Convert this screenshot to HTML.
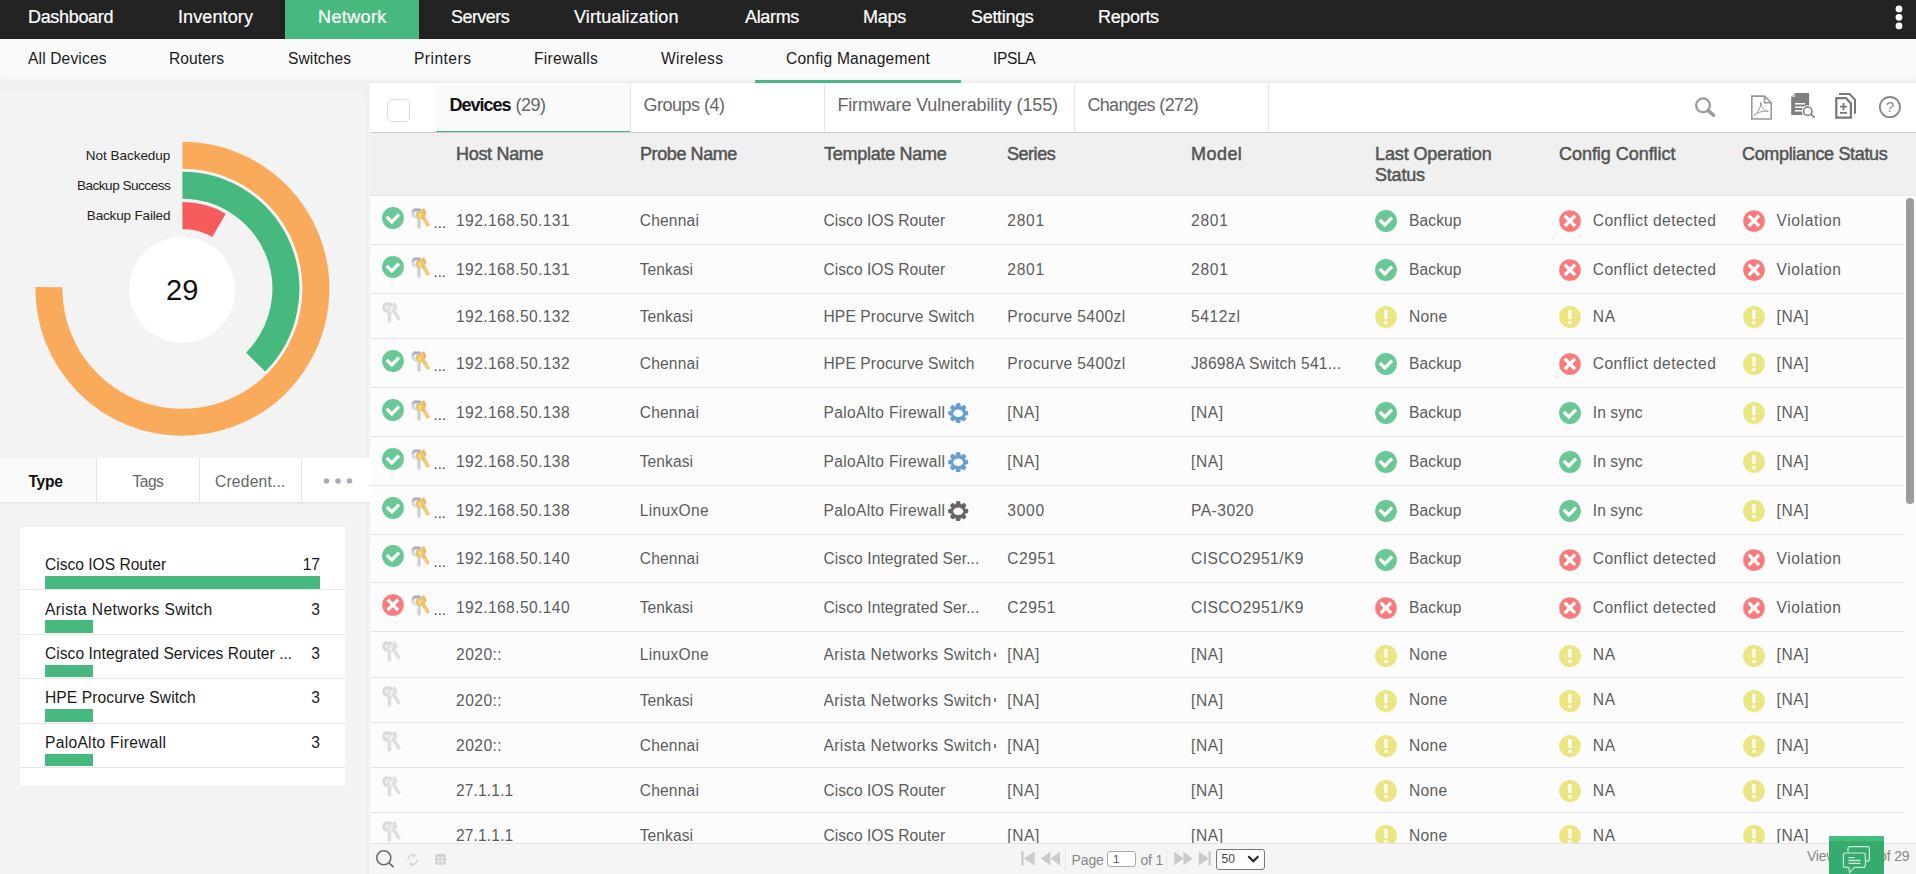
<!DOCTYPE html><html lang="en"><head><meta charset="utf-8"><title>Config Management</title>
<style>
*{box-sizing:border-box}
html,body{margin:0;padding:0}
body{width:1916px;height:874px;overflow:hidden;position:relative;background:#f3f3f3;font-family:"Liberation Sans",sans-serif;color:#5c5c5c;font-size:15.6px}
.f{white-space:nowrap}
.topnav{position:absolute;left:0;top:0;width:1916px;height:38.6px;background:#232323;color:#fff;font-size:18px;white-space:nowrap}
.topnav span.i{position:absolute;top:0;height:39px;line-height:34px;-webkit-text-stroke:.2px #fff}
.topnav .act{position:absolute;top:0;height:38.6px;background:#47b97f;left:285px;width:134px}
.kebab{position:absolute;left:1895px;top:5px;width:8px;height:26px}
.subnav{position:absolute;left:0;top:39px;width:1916px;height:44px;background:#fafafa;color:#1b1b1b;font-size:15.6px;box-shadow:inset 0 -7px 6px -5px rgba(0,0,0,.075)}
.subnav span.i{position:absolute;top:0;line-height:40px;white-space:nowrap}
.subnav .ul{position:absolute;left:755px;width:206px;top:41px;height:3px;background:#47b97f}
.left{position:absolute;left:0;top:83px;width:370px;height:791px;background:#f1f1f1}
.left .in{position:absolute;left:0;top:10px;width:365px;height:781px;background:#f3f3f3;border-top-right-radius:5px}
.donut{position:absolute;left:0;top:0;font-family:"Liberation Sans",sans-serif}
.ltabs{position:absolute;left:0;top:375px;width:370px;height:44px;background:#fff;box-shadow:0 1px 2px rgba(0,0,0,.08);font-size:15.6px;color:#666}
.ltabs div{position:absolute;top:0;height:44px;line-height:47px;border-right:1px solid #e4e4e4;white-space:nowrap}
.tcard{position:absolute;left:20px;top:444px;width:325px;height:259px;background:#fff;padding-top:19px}
.ti{position:relative;height:44.4px;border-bottom:1px solid #e6e6e6;color:#1a1a1a;font-size:15.6px}
.ti .tl{position:absolute;left:25px;top:9.3px;line-height:20px;white-space:nowrap}
.ti .tc{position:absolute;right:25px;top:9.3px;line-height:20px}
.ti i{position:absolute;left:25px;top:30px;height:12.6px;background:#47b97f}
.main{position:absolute;left:370px;top:83px;width:1546px;height:791px;background:#fcfcfc}
.tabs{position:absolute;left:0;top:0;width:1546px;height:50px;background:#fff;border-bottom:1px solid #ccc;font-size:18px;color:#666}
.tabs .tab{position:absolute;top:0;height:49px;border-right:1px solid #e6e6e6;line-height:44px;padding-left:13.6px;white-space:nowrap}
.gl{position:absolute;left:0;right:0;bottom:-.2px;height:1.5px;background:#47b97f}
.cb{position:absolute;left:17px;top:16px;width:23px;height:23px;border:1px solid #dcdcdc;border-radius:5px;background:#fff}
.tool{position:absolute;top:0;left:0}
.thead{position:absolute;left:0;top:50px;width:1546px;height:63px;background:#f0f0f0;border-bottom:1px solid #e6e6e6;font-size:18px;color:#555;-webkit-text-stroke:.5px #555}
.thead div{position:absolute;top:11px;line-height:21px}
.tbody{position:absolute;left:0;top:113px;width:1534px;height:647px;overflow:hidden}
.tr{position:relative;border-bottom:1px solid #e4e4e4;display:flex;align-items:center;width:1534px;background:#fcfcfc}
.c0{width:86px;flex:none;position:relative;align-self:stretch}
.td{width:183.75px;flex:none;white-space:nowrap;overflow:hidden;line-height:22px;position:relative;top:1.1px}
.td.tn{padding-right:12px}
.st0{position:absolute;left:12.1px;top:50%;margin-top:-12.9px;width:22px;height:22px}
.keys{position:absolute;width:20px;height:21px;top:50%}
.k1{left:41px;margin-top:-12.5px}
.k0{left:12px;margin-top:-13.7px}
.dots{position:absolute;left:63.5px;top:50%;margin-top:-6.7px;width:11px;overflow:hidden;color:#444;font-size:15px;line-height:20px;letter-spacing:0;white-space:nowrap}
.td.s{display:flex;align-items:center;overflow:visible;top:0}
.k1{opacity:.88}
.st{width:22px;height:22px;flex:none;margin-left:.4px;position:relative;top:1.4px}
.stt{margin-left:11.9px;position:relative;top:.8px}
.gear{width:20.4px;height:20.4px;vertical-align:-5.2px;margin-left:2.9px}
.clipg{display:inline-block;width:1.5px;height:4px;border-radius:1px 0 0 1px;background:#777;margin-left:2.6px;vertical-align:3.2px}
.foot{position:absolute;left:0;top:760px;width:1546px;height:31px;background:#f5f5f5;border-top:1px solid #e3e3e3;font-size:14px;color:#888}
.foot .t{position:absolute;top:7.5px;line-height:16px}
.foot svg{position:absolute;left:0;top:-1px;z-index:2}
.pin{position:absolute;left:737px;top:7px;width:28.5px;height:15.5px;border:1px solid #aaa;border-radius:3px;background:#fff;font-size:11.5px;line-height:14px;padding-left:5px;color:#555}
.psel{position:absolute;left:845.5px;top:4.5px;width:49px;height:21px;border:1px solid #767676;border-radius:3px;background:#fff;font-size:12px;line-height:19px;padding-left:5px;color:#444}
.sb{position:absolute;left:1536px;top:115px;width:8px;height:306px;border-radius:4px;background:#9c9c9c}
.chat{position:absolute;left:1829px;top:836px;width:55px;height:38px;background:#35ac6e;border-top:5px solid #45bd80}
.chat svg{position:absolute;left:0;top:-5px}
</style></head><body>
<div class="topnav"><i class="act"></i>
<span class="i" style="left:28px"><span class="f" style="letter-spacing: -0.33px;">Dashboard</span></span><span class="i" style="left:178px"><span class="f" style="letter-spacing: 0.11px;">Inventory</span></span><span class="i" style="left:318px"><span class="f" style="letter-spacing: 0.39px;">Network</span></span><span class="i" style="left:451px"><span class="f" style="letter-spacing: -0.55px;">Servers</span></span><span class="i" style="left:574px"><span class="f" style="letter-spacing: 0.13px;">Virtualization</span></span><span class="i" style="left:745px"><span class="f" style="letter-spacing: -0.33px;">Alarms</span></span><span class="i" style="left:863px"><span class="f" style="letter-spacing: -0.27px;">Maps</span></span><span class="i" style="left:971px"><span class="f" style="letter-spacing: -0.31px;">Settings</span></span><span class="i" style="left:1098px"><span class="f" style="letter-spacing: -0.32px;">Reports</span></span>
<svg class="kebab" viewBox="0 0 8 26"><circle cx="4" cy="3.9" r="3.4" fill="#fff"></circle><circle cx="4" cy="12.3" r="3.4" fill="#fff"></circle><circle cx="4" cy="20.9" r="3.4" fill="#fff"></circle></svg>
</div>
<div class="subnav">
<span class="i" style="left:28px"><span class="f" style="letter-spacing: 0.14px;">All Devices</span></span><span class="i" style="left:169px"><span class="f" style="letter-spacing: 0.06px;">Routers</span></span><span class="i" style="left:288px"><span class="f" style="letter-spacing: 0.1px;">Switches</span></span><span class="i" style="left:414px"><span class="f" style="letter-spacing: 0.46px;">Printers</span></span><span class="i" style="left:534px"><span class="f" style="letter-spacing: 0.3px;">Firewalls</span></span><span class="i" style="left:661px"><span class="f" style="letter-spacing: 0.31px;">Wireless</span></span><span class="i" style="left:786px"><span class="f" style="letter-spacing: 0.21px;">Config Management</span></span><span class="i" style="left:993px"><span class="f" style="letter-spacing: -0.38px;">IPSLA</span></span>
<i class="ul"></i>
</div>
<div class="left"><i class="in"></i>
<svg class="donut" width="370" height="375" viewBox="0 83 370 375"><path d="M182.40 155.30 A133.5 133.5 0 1 1 48.91 287.17" fill="none" stroke="#f9ab5b" stroke-width="27"></path><path d="M182.40 185.30 A103.5 103.5 0 0 1 255.59 361.99" fill="none" stroke="#47b97f" stroke-width="27"></path><path d="M182.40 215.50 A73.3 73.3 0 0 1 219.05 225.32" fill="none" stroke="#f75c5c" stroke-width="27"></path><circle cx="182.2" cy="289.7" r="53" fill="#fff"></circle><text x="182.2" y="300" text-anchor="middle" font-size="29" fill="#111" class="n29">29</text><text x="170.3" y="159.8" text-anchor="end" font-size="13.5" fill="#222" class="f" style="letter-spacing: -0.03px;">Not Backedup</text><text x="170.3" y="189.8" text-anchor="end" font-size="13.5" fill="#222" class="f" style="letter-spacing: -0.46px;">Backup Success</text><text x="170.3" y="219.8" text-anchor="end" font-size="13.5" fill="#222" class="f" style="letter-spacing: -0.16px;">Backup Failed</text></svg>
<div class="ltabs">
<div style="left:0;width:97px;background:#fafafa;color:#111;font-weight:bold;padding-left:28.4px"><span class="f" style="letter-spacing: -0.26px;">Type</span></div>
<div style="left:97px;width:103px;padding-left:35.6px"><span class="f" style="letter-spacing: -0.59px;">Tags</span></div>
<div style="left:200px;width:102px;padding-left:15px"><span class="f" style="letter-spacing: 0.21px;">Credent...</span></div>
<div style="left:302px;width:68px;border-right:0;padding-left:20.5px"><svg width="30" height="8" viewBox="0 0 30 8" style="vertical-align:1.6px"><circle cx="3.5" cy="4" r="2.8" fill="#a9adb8"></circle><circle cx="15" cy="4" r="2.8" fill="#a9adb8"></circle><circle cx="26.5" cy="4" r="2.8" fill="#a9adb8"></circle></svg></div>
</div>
<div class="tcard">
<div class="ti"><span class="tl f" style="letter-spacing: -0.01px;">Cisco IOS Router</span><span class="tc">17</span><i style="width:274.5px"></i></div>
<div class="ti"><span class="tl f" style="letter-spacing: 0.37px;">Arista Networks Switch</span><span class="tc">3</span><i style="width:48.0px"></i></div>
<div class="ti"><span class="tl f" style="letter-spacing: 0.03px;">Cisco Integrated Services Router ...</span><span class="tc">3</span><i style="width:48.0px"></i></div>
<div class="ti"><span class="tl f" style="letter-spacing: 0.09px;">HPE Procurve Switch</span><span class="tc">3</span><i style="width:48.0px"></i></div>
<div class="ti"><span class="tl f" style="letter-spacing: 0.3px;">PaloAlto Firewall</span><span class="tc">3</span><i style="width:48.0px"></i></div>
</div>
</div>
<div class="main">
<div class="tabs">
<i class="cb"></i>
<div class="tab" style="left:66px;width:195px;background:#fafafa;color:#666"><b style="color:#111"><span class="f" style="letter-spacing: -1.01px;">Devices</span></b> <span class="f" style="letter-spacing: -0.5px;">(29)</span><i class="gl"></i></div>
<div class="tab" style="left:261px;width:194px;padding-left:12.4px"><span class="f" style="letter-spacing: -0.5px;">Groups (4)</span></div>
<div class="tab" style="left:455px;width:250px;padding-left:12.4px"><span class="f" style="letter-spacing: -0.14px;">Firmware Vulnerability (155)</span></div>
<div class="tab" style="left:705px;width:194px;padding-left:12.4px"><span class="f" style="letter-spacing: -0.64px;">Changes (272)</span></div>
<svg class="tool" width="1546" height="50" viewBox="0 0 1546 50" fill="none">
<circle cx="1333" cy="22.3" r="6.9" stroke="#999" stroke-width="2.2"></circle><path d="M1338.2 27.6 L1343.6 32.2" stroke="#999" stroke-width="3.4" stroke-linecap="round"></path>
<path d="M1381.8 13.1 H1394.5 L1401.2 19.8 V36 H1381.8 Z M1394.5 13.1 V19.8 H1401.2" stroke="#999" stroke-width="1.6" fill="#fff"></path>
<path d="M1384.2 32.4 C1388 30 1391 24 1390.8 19.3 C1391 24 1394 28 1398.3 28.4 C1394 27.5 1388 29 1384.2 32.4" stroke="#999" stroke-width="1"></path>
<path d="M1425.2 10.1 H1439.1 V32.1 H1421.2 V14.1 Z" fill="#808080"></path><path d="M1421.2 14.1 H1425.2 V10.1" fill="#c4c4c4"></path>
<path d="M1425 20.7 H1435 M1425 24.2 H1435 M1425 27.7 H1435" stroke="#fff" stroke-width="1.4"></path>
<circle cx="1437.7" cy="28.2" r="5.9" fill="#fff"></circle><path d="M1441 31.4 L1444.8 34.8" stroke="#fff" stroke-width="3.4"></path>
<circle cx="1437.7" cy="28.2" r="4.2" fill="#fff" stroke="#808080" stroke-width="1.6"></circle><path d="M1440.8 31.2 L1444.6 34.6" stroke="#808080" stroke-width="1.6"></path>
<path d="M1469 11 H1479.6 L1485 16.8 V30.7" stroke="#777" stroke-width="2"></path>
<path d="M1466.3 15.1 H1476 L1480.9 20.5 V34.7 H1466.3 Z" stroke="#777" stroke-width="2.2" fill="#fff"></path>
<path d="M1473.5 20.1 V27.1 M1470 23.6 H1477 M1470 29.9 H1477" stroke="#777" stroke-width="1.9"></path>
<circle cx="1519.9" cy="24.1" r="10.1" stroke="#888" stroke-width="1.8"></circle>
<text x="1519.9" y="29.2" text-anchor="middle" font-size="15" fill="#888" font-family="Liberation Sans, sans-serif">?</text>
</svg>
</div>
<div class="thead">
<div style="left:86px"><span class="f" style="letter-spacing: -0.31px;">Host Name</span></div><div style="left:270px"><span class="f" style="letter-spacing: -0.41px;">Probe Name</span></div><div style="left:454px"><span class="f" style="letter-spacing: -0.27px;">Template Name</span></div><div style="left:637px"><span class="f" style="letter-spacing: -0.47px;">Series</span></div><div style="left:821px"><span class="f" style="letter-spacing: 0.46px;">Model</span></div><div style="left:1005px"><span class="f" style="letter-spacing: -0.11px;">Last Operation</span><br><span class="f" style="letter-spacing: -0.21px;">Status</span></div><div style="left:1189px"><span class="f" style="letter-spacing: -0.04px;">Config Conflict</span></div><div style="left:1372px"><span class="f" style="letter-spacing: -0.33px;">Compliance Status</span></div>
</div>
<div class="tbody">
<div class="tr" style="height:49px"><div class="c0"><svg class="st0" viewBox="0 0 22 22"><circle cx="11" cy="11" r="10.9" fill="#69c896"></circle><path d="M4.7 9.8 L9.8 14.9 L17 7.65" fill="none" stroke="#fff" stroke-width="3.3"></path></svg><svg class="keys k1" viewBox="0 0 20 21"><defs><linearGradient id="sg" x1="0" y1="0" x2="0" y2="1"><stop offset="0" stop-color="#8d99ad"></stop><stop offset=".5" stop-color="#c9ccd2"></stop><stop offset="1" stop-color="#e0e0e0"></stop></linearGradient><linearGradient id="sh" x1="0" y1="0" x2="1" y2="0"><stop offset="0" stop-color="#e9e9e9"></stop><stop offset=".7" stop-color="#cfcfcf"></stop><stop offset="1" stop-color="#8f8f8f"></stop></linearGradient></defs><path d="M3 .6 H8.8 L11 3 V8 L8.8 10.6 H3 L.6 8 V3 Z" fill="url(#sg)"></path><rect x="3.2" y="3.6" width="3.6" height="4" rx="1" fill="#eef0f4"></rect><rect x="5.6" y="9.6" width="3.6" height="10.8" rx=".8" fill="url(#sh)"></rect><path d="M10.6 1.2 L13.2 .2 L15.6 5.6 L13.4 8.4 Z" fill="#eeb04c"></path><ellipse cx="8.8" cy="7" rx="3.9" ry="4.2" fill="#efbb58"></ellipse><ellipse cx="9.6" cy="7.6" rx="1.8" ry="2.4" fill="#f8e37c"></ellipse><path d="M11.4 8 L16.6 16.6" stroke="#efba56" stroke-width="3.6" stroke-linecap="round" fill="none"></path><path d="M13.6 12.4 L16.2 16.4" stroke="#f7d477" stroke-width="1.4" fill="none"></path></svg><span class="dots">...</span></div><div class="td"><span class="f" style="letter-spacing: 0.4px;">192.168.50.131</span></div><div class="td"><span class="f" style="letter-spacing: 0.17px;">Chennai</span></div><div class="td tn"><span class="f" style="letter-spacing: 0.02px;">Cisco IOS Router</span></div><div class="td"><span class="f" style="letter-spacing: 0.72px;">2801</span></div><div class="td"><span class="f" style="letter-spacing: 0.72px;">2801</span></div><div class="td s"><svg class="st" viewBox="0 0 22 22"><circle cx="11" cy="11" r="10.9" fill="#69c896"></circle><path d="M4.7 9.8 L9.8 14.9 L17 7.65" fill="none" stroke="#fff" stroke-width="3.3"></path></svg><span class="f stt" style="letter-spacing: 0.1px;">Backup</span></div><div class="td s"><svg class="st" viewBox="0 0 22 22"><circle cx="11" cy="11" r="10.8" fill="#f97b7b"></circle><path d="M5.7 5.7 L16.1 16.1 M16.1 5.7 L5.7 16.1" fill="none" stroke="#fff" stroke-width="3.3"></path></svg><span class="f stt" style="letter-spacing: 0.43px;">Conflict detected</span></div><div class="td s"><svg class="st" viewBox="0 0 22 22"><circle cx="11" cy="11" r="10.8" fill="#f97b7b"></circle><path d="M5.7 5.7 L16.1 16.1 M16.1 5.7 L5.7 16.1" fill="none" stroke="#fff" stroke-width="3.3"></path></svg><span class="f stt" style="letter-spacing: 0.61px;">Violation</span></div></div>
<div class="tr" style="height:49px"><div class="c0"><svg class="st0" viewBox="0 0 22 22"><circle cx="11" cy="11" r="10.9" fill="#69c896"></circle><path d="M4.7 9.8 L9.8 14.9 L17 7.65" fill="none" stroke="#fff" stroke-width="3.3"></path></svg><svg class="keys k1" viewBox="0 0 20 21"><defs><linearGradient id="sg" x1="0" y1="0" x2="0" y2="1"><stop offset="0" stop-color="#8d99ad"></stop><stop offset=".5" stop-color="#c9ccd2"></stop><stop offset="1" stop-color="#e0e0e0"></stop></linearGradient><linearGradient id="sh" x1="0" y1="0" x2="1" y2="0"><stop offset="0" stop-color="#e9e9e9"></stop><stop offset=".7" stop-color="#cfcfcf"></stop><stop offset="1" stop-color="#8f8f8f"></stop></linearGradient></defs><path d="M3 .6 H8.8 L11 3 V8 L8.8 10.6 H3 L.6 8 V3 Z" fill="url(#sg)"></path><rect x="3.2" y="3.6" width="3.6" height="4" rx="1" fill="#eef0f4"></rect><rect x="5.6" y="9.6" width="3.6" height="10.8" rx=".8" fill="url(#sh)"></rect><path d="M10.6 1.2 L13.2 .2 L15.6 5.6 L13.4 8.4 Z" fill="#eeb04c"></path><ellipse cx="8.8" cy="7" rx="3.9" ry="4.2" fill="#efbb58"></ellipse><ellipse cx="9.6" cy="7.6" rx="1.8" ry="2.4" fill="#f8e37c"></ellipse><path d="M11.4 8 L16.6 16.6" stroke="#efba56" stroke-width="3.6" stroke-linecap="round" fill="none"></path><path d="M13.6 12.4 L16.2 16.4" stroke="#f7d477" stroke-width="1.4" fill="none"></path></svg><span class="dots">...</span></div><div class="td"><span class="f" style="letter-spacing: 0.4px;">192.168.50.131</span></div><div class="td"><span class="f" style="letter-spacing: 0.07px;">Tenkasi</span></div><div class="td tn"><span class="f" style="letter-spacing: 0.02px;">Cisco IOS Router</span></div><div class="td"><span class="f" style="letter-spacing: 0.72px;">2801</span></div><div class="td"><span class="f" style="letter-spacing: 0.72px;">2801</span></div><div class="td s"><svg class="st" viewBox="0 0 22 22"><circle cx="11" cy="11" r="10.9" fill="#69c896"></circle><path d="M4.7 9.8 L9.8 14.9 L17 7.65" fill="none" stroke="#fff" stroke-width="3.3"></path></svg><span class="f stt" style="letter-spacing: 0.1px;">Backup</span></div><div class="td s"><svg class="st" viewBox="0 0 22 22"><circle cx="11" cy="11" r="10.8" fill="#f97b7b"></circle><path d="M5.7 5.7 L16.1 16.1 M16.1 5.7 L5.7 16.1" fill="none" stroke="#fff" stroke-width="3.3"></path></svg><span class="f stt" style="letter-spacing: 0.43px;">Conflict detected</span></div><div class="td s"><svg class="st" viewBox="0 0 22 22"><circle cx="11" cy="11" r="10.8" fill="#f97b7b"></circle><path d="M5.7 5.7 L16.1 16.1 M16.1 5.7 L5.7 16.1" fill="none" stroke="#fff" stroke-width="3.3"></path></svg><span class="f stt" style="letter-spacing: 0.61px;">Violation</span></div></div>
<div class="tr" style="height:45px"><div class="c0"><svg class="keys k0" viewBox="0 0 20 21" opacity=".55"><path d="M3 .6 H8.8 L11 3 V8 L8.8 10.6 H3 L.6 8 V3 Z" fill="#b9bcc2"></path><rect x="3.2" y="3.6" width="3.6" height="4" rx="1" fill="#f1f1f1"></rect><rect x="5.6" y="9.6" width="3.6" height="10.8" rx=".8" fill="#c6c6c6"></rect><path d="M10.6 1.2 L13.2 .2 L15.6 5.6 L13.4 8.4 Z" fill="#c2c2c2"></path><ellipse cx="8.8" cy="7" rx="3.9" ry="4.2" fill="#cfcfcf"></ellipse><ellipse cx="9.6" cy="7.6" rx="1.8" ry="2.4" fill="#ececec"></ellipse><path d="M11.4 8 L16.6 16.6" stroke="#c9c9c9" stroke-width="3.6" stroke-linecap="round" fill="none"></path></svg></div><div class="td"><span class="f" style="letter-spacing: 0.4px;">192.168.50.132</span></div><div class="td"><span class="f" style="letter-spacing: 0.07px;">Tenkasi</span></div><div class="td tn"><span class="f" style="letter-spacing: 0.11px;">HPE Procurve Switch</span></div><div class="td"><span class="f" style="letter-spacing: 0.37px;">Procurve 5400zl</span></div><div class="td"><span class="f" style="letter-spacing: 0.59px;">5412zl</span></div><div class="td s"><svg class="st" viewBox="0 0 22 22"><circle cx="11" cy="11" r="10.9" fill="#ebe582"></circle><path d="M10.9 4 V13 M10.9 14.9 V18" fill="none" stroke="#fff" stroke-width="3.3"></path></svg><span class="f stt" style="letter-spacing: 0.28px;">None</span></div><div class="td s"><svg class="st" viewBox="0 0 22 22"><circle cx="11" cy="11" r="10.9" fill="#ebe582"></circle><path d="M10.9 4 V13 M10.9 14.9 V18" fill="none" stroke="#fff" stroke-width="3.3"></path></svg><span class="f stt" style="letter-spacing: 0.66px;">NA</span></div><div class="td s"><svg class="st" viewBox="0 0 22 22"><circle cx="11" cy="11" r="10.9" fill="#ebe582"></circle><path d="M10.9 4 V13 M10.9 14.9 V18" fill="none" stroke="#fff" stroke-width="3.3"></path></svg><span class="f stt" style="letter-spacing: 0.57px;">[NA]</span></div></div>
<div class="tr" style="height:49px"><div class="c0"><svg class="st0" viewBox="0 0 22 22"><circle cx="11" cy="11" r="10.9" fill="#69c896"></circle><path d="M4.7 9.8 L9.8 14.9 L17 7.65" fill="none" stroke="#fff" stroke-width="3.3"></path></svg><svg class="keys k1" viewBox="0 0 20 21"><defs><linearGradient id="sg" x1="0" y1="0" x2="0" y2="1"><stop offset="0" stop-color="#8d99ad"></stop><stop offset=".5" stop-color="#c9ccd2"></stop><stop offset="1" stop-color="#e0e0e0"></stop></linearGradient><linearGradient id="sh" x1="0" y1="0" x2="1" y2="0"><stop offset="0" stop-color="#e9e9e9"></stop><stop offset=".7" stop-color="#cfcfcf"></stop><stop offset="1" stop-color="#8f8f8f"></stop></linearGradient></defs><path d="M3 .6 H8.8 L11 3 V8 L8.8 10.6 H3 L.6 8 V3 Z" fill="url(#sg)"></path><rect x="3.2" y="3.6" width="3.6" height="4" rx="1" fill="#eef0f4"></rect><rect x="5.6" y="9.6" width="3.6" height="10.8" rx=".8" fill="url(#sh)"></rect><path d="M10.6 1.2 L13.2 .2 L15.6 5.6 L13.4 8.4 Z" fill="#eeb04c"></path><ellipse cx="8.8" cy="7" rx="3.9" ry="4.2" fill="#efbb58"></ellipse><ellipse cx="9.6" cy="7.6" rx="1.8" ry="2.4" fill="#f8e37c"></ellipse><path d="M11.4 8 L16.6 16.6" stroke="#efba56" stroke-width="3.6" stroke-linecap="round" fill="none"></path><path d="M13.6 12.4 L16.2 16.4" stroke="#f7d477" stroke-width="1.4" fill="none"></path></svg><span class="dots">...</span></div><div class="td"><span class="f" style="letter-spacing: 0.4px;">192.168.50.132</span></div><div class="td"><span class="f" style="letter-spacing: 0.17px;">Chennai</span></div><div class="td tn"><span class="f" style="letter-spacing: 0.11px;">HPE Procurve Switch</span></div><div class="td"><span class="f" style="letter-spacing: 0.37px;">Procurve 5400zl</span></div><div class="td"><span class="f" style="letter-spacing: 0.24px;">J8698A Switch 541...</span></div><div class="td s"><svg class="st" viewBox="0 0 22 22"><circle cx="11" cy="11" r="10.9" fill="#69c896"></circle><path d="M4.7 9.8 L9.8 14.9 L17 7.65" fill="none" stroke="#fff" stroke-width="3.3"></path></svg><span class="f stt" style="letter-spacing: 0.1px;">Backup</span></div><div class="td s"><svg class="st" viewBox="0 0 22 22"><circle cx="11" cy="11" r="10.8" fill="#f97b7b"></circle><path d="M5.7 5.7 L16.1 16.1 M16.1 5.7 L5.7 16.1" fill="none" stroke="#fff" stroke-width="3.3"></path></svg><span class="f stt" style="letter-spacing: 0.43px;">Conflict detected</span></div><div class="td s"><svg class="st" viewBox="0 0 22 22"><circle cx="11" cy="11" r="10.9" fill="#ebe582"></circle><path d="M10.9 4 V13 M10.9 14.9 V18" fill="none" stroke="#fff" stroke-width="3.3"></path></svg><span class="f stt" style="letter-spacing: 0.57px;">[NA]</span></div></div>
<div class="tr" style="height:49px"><div class="c0"><svg class="st0" viewBox="0 0 22 22"><circle cx="11" cy="11" r="10.9" fill="#69c896"></circle><path d="M4.7 9.8 L9.8 14.9 L17 7.65" fill="none" stroke="#fff" stroke-width="3.3"></path></svg><svg class="keys k1" viewBox="0 0 20 21"><defs><linearGradient id="sg" x1="0" y1="0" x2="0" y2="1"><stop offset="0" stop-color="#8d99ad"></stop><stop offset=".5" stop-color="#c9ccd2"></stop><stop offset="1" stop-color="#e0e0e0"></stop></linearGradient><linearGradient id="sh" x1="0" y1="0" x2="1" y2="0"><stop offset="0" stop-color="#e9e9e9"></stop><stop offset=".7" stop-color="#cfcfcf"></stop><stop offset="1" stop-color="#8f8f8f"></stop></linearGradient></defs><path d="M3 .6 H8.8 L11 3 V8 L8.8 10.6 H3 L.6 8 V3 Z" fill="url(#sg)"></path><rect x="3.2" y="3.6" width="3.6" height="4" rx="1" fill="#eef0f4"></rect><rect x="5.6" y="9.6" width="3.6" height="10.8" rx=".8" fill="url(#sh)"></rect><path d="M10.6 1.2 L13.2 .2 L15.6 5.6 L13.4 8.4 Z" fill="#eeb04c"></path><ellipse cx="8.8" cy="7" rx="3.9" ry="4.2" fill="#efbb58"></ellipse><ellipse cx="9.6" cy="7.6" rx="1.8" ry="2.4" fill="#f8e37c"></ellipse><path d="M11.4 8 L16.6 16.6" stroke="#efba56" stroke-width="3.6" stroke-linecap="round" fill="none"></path><path d="M13.6 12.4 L16.2 16.4" stroke="#f7d477" stroke-width="1.4" fill="none"></path></svg><span class="dots">...</span></div><div class="td"><span class="f" style="letter-spacing: 0.4px;">192.168.50.138</span></div><div class="td"><span class="f" style="letter-spacing: 0.17px;">Chennai</span></div><div class="td tn"><span class="f" style="letter-spacing: 0.33px;">PaloAlto Firewall</span><svg class="gear" viewBox="0 0 20 20"><g fill="#659fd4"><circle cx="10" cy="10" r="7.3"></circle><rect x="7.7" y="0.1" width="4.6" height="5.4" rx="1.9" transform="rotate(0 10 10)"></rect><rect x="7.7" y="0.1" width="4.6" height="5.4" rx="1.9" transform="rotate(45 10 10)"></rect><rect x="7.7" y="0.1" width="4.6" height="5.4" rx="1.9" transform="rotate(90 10 10)"></rect><rect x="7.7" y="0.1" width="4.6" height="5.4" rx="1.9" transform="rotate(135 10 10)"></rect><rect x="7.7" y="0.1" width="4.6" height="5.4" rx="1.9" transform="rotate(180 10 10)"></rect><rect x="7.7" y="0.1" width="4.6" height="5.4" rx="1.9" transform="rotate(225 10 10)"></rect><rect x="7.7" y="0.1" width="4.6" height="5.4" rx="1.9" transform="rotate(270 10 10)"></rect><rect x="7.7" y="0.1" width="4.6" height="5.4" rx="1.9" transform="rotate(315 10 10)"></rect></g><ellipse cx="10" cy="10.1" rx="4.9" ry="3.7" fill="#fcfcfc"></ellipse></svg></div><div class="td"><span class="f" style="letter-spacing: 0.57px;">[NA]</span></div><div class="td"><span class="f" style="letter-spacing: 0.57px;">[NA]</span></div><div class="td s"><svg class="st" viewBox="0 0 22 22"><circle cx="11" cy="11" r="10.9" fill="#69c896"></circle><path d="M4.7 9.8 L9.8 14.9 L17 7.65" fill="none" stroke="#fff" stroke-width="3.3"></path></svg><span class="f stt" style="letter-spacing: 0.1px;">Backup</span></div><div class="td s"><svg class="st" viewBox="0 0 22 22"><circle cx="11" cy="11" r="10.9" fill="#69c896"></circle><path d="M4.7 9.8 L9.8 14.9 L17 7.65" fill="none" stroke="#fff" stroke-width="3.3"></path></svg><span class="f stt" style="letter-spacing: 0.06px;">In sync</span></div><div class="td s"><svg class="st" viewBox="0 0 22 22"><circle cx="11" cy="11" r="10.9" fill="#ebe582"></circle><path d="M10.9 4 V13 M10.9 14.9 V18" fill="none" stroke="#fff" stroke-width="3.3"></path></svg><span class="f stt" style="letter-spacing: 0.57px;">[NA]</span></div></div>
<div class="tr" style="height:49px"><div class="c0"><svg class="st0" viewBox="0 0 22 22"><circle cx="11" cy="11" r="10.9" fill="#69c896"></circle><path d="M4.7 9.8 L9.8 14.9 L17 7.65" fill="none" stroke="#fff" stroke-width="3.3"></path></svg><svg class="keys k1" viewBox="0 0 20 21"><defs><linearGradient id="sg" x1="0" y1="0" x2="0" y2="1"><stop offset="0" stop-color="#8d99ad"></stop><stop offset=".5" stop-color="#c9ccd2"></stop><stop offset="1" stop-color="#e0e0e0"></stop></linearGradient><linearGradient id="sh" x1="0" y1="0" x2="1" y2="0"><stop offset="0" stop-color="#e9e9e9"></stop><stop offset=".7" stop-color="#cfcfcf"></stop><stop offset="1" stop-color="#8f8f8f"></stop></linearGradient></defs><path d="M3 .6 H8.8 L11 3 V8 L8.8 10.6 H3 L.6 8 V3 Z" fill="url(#sg)"></path><rect x="3.2" y="3.6" width="3.6" height="4" rx="1" fill="#eef0f4"></rect><rect x="5.6" y="9.6" width="3.6" height="10.8" rx=".8" fill="url(#sh)"></rect><path d="M10.6 1.2 L13.2 .2 L15.6 5.6 L13.4 8.4 Z" fill="#eeb04c"></path><ellipse cx="8.8" cy="7" rx="3.9" ry="4.2" fill="#efbb58"></ellipse><ellipse cx="9.6" cy="7.6" rx="1.8" ry="2.4" fill="#f8e37c"></ellipse><path d="M11.4 8 L16.6 16.6" stroke="#efba56" stroke-width="3.6" stroke-linecap="round" fill="none"></path><path d="M13.6 12.4 L16.2 16.4" stroke="#f7d477" stroke-width="1.4" fill="none"></path></svg><span class="dots">...</span></div><div class="td"><span class="f" style="letter-spacing: 0.4px;">192.168.50.138</span></div><div class="td"><span class="f" style="letter-spacing: 0.07px;">Tenkasi</span></div><div class="td tn"><span class="f" style="letter-spacing: 0.33px;">PaloAlto Firewall</span><svg class="gear" viewBox="0 0 20 20"><g fill="#659fd4"><circle cx="10" cy="10" r="7.3"></circle><rect x="7.7" y="0.1" width="4.6" height="5.4" rx="1.9" transform="rotate(0 10 10)"></rect><rect x="7.7" y="0.1" width="4.6" height="5.4" rx="1.9" transform="rotate(45 10 10)"></rect><rect x="7.7" y="0.1" width="4.6" height="5.4" rx="1.9" transform="rotate(90 10 10)"></rect><rect x="7.7" y="0.1" width="4.6" height="5.4" rx="1.9" transform="rotate(135 10 10)"></rect><rect x="7.7" y="0.1" width="4.6" height="5.4" rx="1.9" transform="rotate(180 10 10)"></rect><rect x="7.7" y="0.1" width="4.6" height="5.4" rx="1.9" transform="rotate(225 10 10)"></rect><rect x="7.7" y="0.1" width="4.6" height="5.4" rx="1.9" transform="rotate(270 10 10)"></rect><rect x="7.7" y="0.1" width="4.6" height="5.4" rx="1.9" transform="rotate(315 10 10)"></rect></g><ellipse cx="10" cy="10.1" rx="4.9" ry="3.7" fill="#fcfcfc"></ellipse></svg></div><div class="td"><span class="f" style="letter-spacing: 0.57px;">[NA]</span></div><div class="td"><span class="f" style="letter-spacing: 0.57px;">[NA]</span></div><div class="td s"><svg class="st" viewBox="0 0 22 22"><circle cx="11" cy="11" r="10.9" fill="#69c896"></circle><path d="M4.7 9.8 L9.8 14.9 L17 7.65" fill="none" stroke="#fff" stroke-width="3.3"></path></svg><span class="f stt" style="letter-spacing: 0.1px;">Backup</span></div><div class="td s"><svg class="st" viewBox="0 0 22 22"><circle cx="11" cy="11" r="10.9" fill="#69c896"></circle><path d="M4.7 9.8 L9.8 14.9 L17 7.65" fill="none" stroke="#fff" stroke-width="3.3"></path></svg><span class="f stt" style="letter-spacing: 0.06px;">In sync</span></div><div class="td s"><svg class="st" viewBox="0 0 22 22"><circle cx="11" cy="11" r="10.9" fill="#ebe582"></circle><path d="M10.9 4 V13 M10.9 14.9 V18" fill="none" stroke="#fff" stroke-width="3.3"></path></svg><span class="f stt" style="letter-spacing: 0.57px;">[NA]</span></div></div>
<div class="tr" style="height:48.5px"><div class="c0"><svg class="st0" viewBox="0 0 22 22"><circle cx="11" cy="11" r="10.9" fill="#69c896"></circle><path d="M4.7 9.8 L9.8 14.9 L17 7.65" fill="none" stroke="#fff" stroke-width="3.3"></path></svg><svg class="keys k1" viewBox="0 0 20 21"><defs><linearGradient id="sg" x1="0" y1="0" x2="0" y2="1"><stop offset="0" stop-color="#8d99ad"></stop><stop offset=".5" stop-color="#c9ccd2"></stop><stop offset="1" stop-color="#e0e0e0"></stop></linearGradient><linearGradient id="sh" x1="0" y1="0" x2="1" y2="0"><stop offset="0" stop-color="#e9e9e9"></stop><stop offset=".7" stop-color="#cfcfcf"></stop><stop offset="1" stop-color="#8f8f8f"></stop></linearGradient></defs><path d="M3 .6 H8.8 L11 3 V8 L8.8 10.6 H3 L.6 8 V3 Z" fill="url(#sg)"></path><rect x="3.2" y="3.6" width="3.6" height="4" rx="1" fill="#eef0f4"></rect><rect x="5.6" y="9.6" width="3.6" height="10.8" rx=".8" fill="url(#sh)"></rect><path d="M10.6 1.2 L13.2 .2 L15.6 5.6 L13.4 8.4 Z" fill="#eeb04c"></path><ellipse cx="8.8" cy="7" rx="3.9" ry="4.2" fill="#efbb58"></ellipse><ellipse cx="9.6" cy="7.6" rx="1.8" ry="2.4" fill="#f8e37c"></ellipse><path d="M11.4 8 L16.6 16.6" stroke="#efba56" stroke-width="3.6" stroke-linecap="round" fill="none"></path><path d="M13.6 12.4 L16.2 16.4" stroke="#f7d477" stroke-width="1.4" fill="none"></path></svg><span class="dots">...</span></div><div class="td"><span class="f" style="letter-spacing: 0.4px;">192.168.50.138</span></div><div class="td"><span class="f" style="letter-spacing: 0.3px;">LinuxOne</span></div><div class="td tn"><span class="f" style="letter-spacing: 0.33px;">PaloAlto Firewall</span><svg class="gear" viewBox="0 0 20 20"><g fill="#666"><circle cx="10" cy="10" r="7.3"></circle><rect x="7.7" y="0.1" width="4.6" height="5.4" rx="1.9" transform="rotate(0 10 10)"></rect><rect x="7.7" y="0.1" width="4.6" height="5.4" rx="1.9" transform="rotate(45 10 10)"></rect><rect x="7.7" y="0.1" width="4.6" height="5.4" rx="1.9" transform="rotate(90 10 10)"></rect><rect x="7.7" y="0.1" width="4.6" height="5.4" rx="1.9" transform="rotate(135 10 10)"></rect><rect x="7.7" y="0.1" width="4.6" height="5.4" rx="1.9" transform="rotate(180 10 10)"></rect><rect x="7.7" y="0.1" width="4.6" height="5.4" rx="1.9" transform="rotate(225 10 10)"></rect><rect x="7.7" y="0.1" width="4.6" height="5.4" rx="1.9" transform="rotate(270 10 10)"></rect><rect x="7.7" y="0.1" width="4.6" height="5.4" rx="1.9" transform="rotate(315 10 10)"></rect></g><ellipse cx="10" cy="10.1" rx="4.9" ry="3.7" fill="#fcfcfc"></ellipse></svg></div><div class="td"><span class="f" style="letter-spacing: 0.72px;">3000</span></div><div class="td"><span class="f" style="letter-spacing: 0.47px;">PA-3020</span></div><div class="td s"><svg class="st" viewBox="0 0 22 22"><circle cx="11" cy="11" r="10.9" fill="#69c896"></circle><path d="M4.7 9.8 L9.8 14.9 L17 7.65" fill="none" stroke="#fff" stroke-width="3.3"></path></svg><span class="f stt" style="letter-spacing: 0.1px;">Backup</span></div><div class="td s"><svg class="st" viewBox="0 0 22 22"><circle cx="11" cy="11" r="10.9" fill="#69c896"></circle><path d="M4.7 9.8 L9.8 14.9 L17 7.65" fill="none" stroke="#fff" stroke-width="3.3"></path></svg><span class="f stt" style="letter-spacing: 0.06px;">In sync</span></div><div class="td s"><svg class="st" viewBox="0 0 22 22"><circle cx="11" cy="11" r="10.9" fill="#ebe582"></circle><path d="M10.9 4 V13 M10.9 14.9 V18" fill="none" stroke="#fff" stroke-width="3.3"></path></svg><span class="f stt" style="letter-spacing: 0.57px;">[NA]</span></div></div>
<div class="tr" style="height:48.5px"><div class="c0"><svg class="st0" viewBox="0 0 22 22"><circle cx="11" cy="11" r="10.9" fill="#69c896"></circle><path d="M4.7 9.8 L9.8 14.9 L17 7.65" fill="none" stroke="#fff" stroke-width="3.3"></path></svg><svg class="keys k1" viewBox="0 0 20 21"><defs><linearGradient id="sg" x1="0" y1="0" x2="0" y2="1"><stop offset="0" stop-color="#8d99ad"></stop><stop offset=".5" stop-color="#c9ccd2"></stop><stop offset="1" stop-color="#e0e0e0"></stop></linearGradient><linearGradient id="sh" x1="0" y1="0" x2="1" y2="0"><stop offset="0" stop-color="#e9e9e9"></stop><stop offset=".7" stop-color="#cfcfcf"></stop><stop offset="1" stop-color="#8f8f8f"></stop></linearGradient></defs><path d="M3 .6 H8.8 L11 3 V8 L8.8 10.6 H3 L.6 8 V3 Z" fill="url(#sg)"></path><rect x="3.2" y="3.6" width="3.6" height="4" rx="1" fill="#eef0f4"></rect><rect x="5.6" y="9.6" width="3.6" height="10.8" rx=".8" fill="url(#sh)"></rect><path d="M10.6 1.2 L13.2 .2 L15.6 5.6 L13.4 8.4 Z" fill="#eeb04c"></path><ellipse cx="8.8" cy="7" rx="3.9" ry="4.2" fill="#efbb58"></ellipse><ellipse cx="9.6" cy="7.6" rx="1.8" ry="2.4" fill="#f8e37c"></ellipse><path d="M11.4 8 L16.6 16.6" stroke="#efba56" stroke-width="3.6" stroke-linecap="round" fill="none"></path><path d="M13.6 12.4 L16.2 16.4" stroke="#f7d477" stroke-width="1.4" fill="none"></path></svg><span class="dots">...</span></div><div class="td"><span class="f" style="letter-spacing: 0.4px;">192.168.50.140</span></div><div class="td"><span class="f" style="letter-spacing: 0.17px;">Chennai</span></div><div class="td tn"><span class="f" style="letter-spacing: 0.07px;">Cisco Integrated Ser...</span></div><div class="td"><span class="f" style="letter-spacing: 0.57px;">C2951</span></div><div class="td"><span class="f" style="letter-spacing: 0.46px;">CISCO2951/K9</span></div><div class="td s"><svg class="st" viewBox="0 0 22 22"><circle cx="11" cy="11" r="10.9" fill="#69c896"></circle><path d="M4.7 9.8 L9.8 14.9 L17 7.65" fill="none" stroke="#fff" stroke-width="3.3"></path></svg><span class="f stt" style="letter-spacing: 0.1px;">Backup</span></div><div class="td s"><svg class="st" viewBox="0 0 22 22"><circle cx="11" cy="11" r="10.8" fill="#f97b7b"></circle><path d="M5.7 5.7 L16.1 16.1 M16.1 5.7 L5.7 16.1" fill="none" stroke="#fff" stroke-width="3.3"></path></svg><span class="f stt" style="letter-spacing: 0.43px;">Conflict detected</span></div><div class="td s"><svg class="st" viewBox="0 0 22 22"><circle cx="11" cy="11" r="10.8" fill="#f97b7b"></circle><path d="M5.7 5.7 L16.1 16.1 M16.1 5.7 L5.7 16.1" fill="none" stroke="#fff" stroke-width="3.3"></path></svg><span class="f stt" style="letter-spacing: 0.61px;">Violation</span></div></div>
<div class="tr" style="height:49px"><div class="c0"><svg class="st0" viewBox="0 0 22 22"><circle cx="11" cy="11" r="10.8" fill="#f97b7b"></circle><path d="M5.7 5.7 L16.1 16.1 M16.1 5.7 L5.7 16.1" fill="none" stroke="#fff" stroke-width="3.3"></path></svg><svg class="keys k1" viewBox="0 0 20 21"><defs><linearGradient id="sg" x1="0" y1="0" x2="0" y2="1"><stop offset="0" stop-color="#8d99ad"></stop><stop offset=".5" stop-color="#c9ccd2"></stop><stop offset="1" stop-color="#e0e0e0"></stop></linearGradient><linearGradient id="sh" x1="0" y1="0" x2="1" y2="0"><stop offset="0" stop-color="#e9e9e9"></stop><stop offset=".7" stop-color="#cfcfcf"></stop><stop offset="1" stop-color="#8f8f8f"></stop></linearGradient></defs><path d="M3 .6 H8.8 L11 3 V8 L8.8 10.6 H3 L.6 8 V3 Z" fill="url(#sg)"></path><rect x="3.2" y="3.6" width="3.6" height="4" rx="1" fill="#eef0f4"></rect><rect x="5.6" y="9.6" width="3.6" height="10.8" rx=".8" fill="url(#sh)"></rect><path d="M10.6 1.2 L13.2 .2 L15.6 5.6 L13.4 8.4 Z" fill="#eeb04c"></path><ellipse cx="8.8" cy="7" rx="3.9" ry="4.2" fill="#efbb58"></ellipse><ellipse cx="9.6" cy="7.6" rx="1.8" ry="2.4" fill="#f8e37c"></ellipse><path d="M11.4 8 L16.6 16.6" stroke="#efba56" stroke-width="3.6" stroke-linecap="round" fill="none"></path><path d="M13.6 12.4 L16.2 16.4" stroke="#f7d477" stroke-width="1.4" fill="none"></path></svg><span class="dots">...</span></div><div class="td"><span class="f" style="letter-spacing: 0.4px;">192.168.50.140</span></div><div class="td"><span class="f" style="letter-spacing: 0.07px;">Tenkasi</span></div><div class="td tn"><span class="f" style="letter-spacing: 0.07px;">Cisco Integrated Ser...</span></div><div class="td"><span class="f" style="letter-spacing: 0.57px;">C2951</span></div><div class="td"><span class="f" style="letter-spacing: 0.46px;">CISCO2951/K9</span></div><div class="td s"><svg class="st" viewBox="0 0 22 22"><circle cx="11" cy="11" r="10.8" fill="#f97b7b"></circle><path d="M5.7 5.7 L16.1 16.1 M16.1 5.7 L5.7 16.1" fill="none" stroke="#fff" stroke-width="3.3"></path></svg><span class="f stt" style="letter-spacing: 0.1px;">Backup</span></div><div class="td s"><svg class="st" viewBox="0 0 22 22"><circle cx="11" cy="11" r="10.8" fill="#f97b7b"></circle><path d="M5.7 5.7 L16.1 16.1 M16.1 5.7 L5.7 16.1" fill="none" stroke="#fff" stroke-width="3.3"></path></svg><span class="f stt" style="letter-spacing: 0.43px;">Conflict detected</span></div><div class="td s"><svg class="st" viewBox="0 0 22 22"><circle cx="11" cy="11" r="10.8" fill="#f97b7b"></circle><path d="M5.7 5.7 L16.1 16.1 M16.1 5.7 L5.7 16.1" fill="none" stroke="#fff" stroke-width="3.3"></path></svg><span class="f stt" style="letter-spacing: 0.61px;">Violation</span></div></div>
<div class="tr" style="height:45.5px"><div class="c0"><svg class="keys k0" viewBox="0 0 20 21" opacity=".55"><path d="M3 .6 H8.8 L11 3 V8 L8.8 10.6 H3 L.6 8 V3 Z" fill="#b9bcc2"></path><rect x="3.2" y="3.6" width="3.6" height="4" rx="1" fill="#f1f1f1"></rect><rect x="5.6" y="9.6" width="3.6" height="10.8" rx=".8" fill="#c6c6c6"></rect><path d="M10.6 1.2 L13.2 .2 L15.6 5.6 L13.4 8.4 Z" fill="#c2c2c2"></path><ellipse cx="8.8" cy="7" rx="3.9" ry="4.2" fill="#cfcfcf"></ellipse><ellipse cx="9.6" cy="7.6" rx="1.8" ry="2.4" fill="#ececec"></ellipse><path d="M11.4 8 L16.6 16.6" stroke="#c9c9c9" stroke-width="3.6" stroke-linecap="round" fill="none"></path></svg></div><div class="td"><span class="f" style="letter-spacing: 0.47px;">2020::</span></div><div class="td"><span class="f" style="letter-spacing: 0.3px;">LinuxOne</span></div><div class="td tn"><span class="f" style="letter-spacing: 0.39px;">Arista Networks Switch</span><i class="clipg"></i></div><div class="td"><span class="f" style="letter-spacing: 0.57px;">[NA]</span></div><div class="td"><span class="f" style="letter-spacing: 0.57px;">[NA]</span></div><div class="td s"><svg class="st" viewBox="0 0 22 22"><circle cx="11" cy="11" r="10.9" fill="#ebe582"></circle><path d="M10.9 4 V13 M10.9 14.9 V18" fill="none" stroke="#fff" stroke-width="3.3"></path></svg><span class="f stt" style="letter-spacing: 0.28px;">None</span></div><div class="td s"><svg class="st" viewBox="0 0 22 22"><circle cx="11" cy="11" r="10.9" fill="#ebe582"></circle><path d="M10.9 4 V13 M10.9 14.9 V18" fill="none" stroke="#fff" stroke-width="3.3"></path></svg><span class="f stt" style="letter-spacing: 0.66px;">NA</span></div><div class="td s"><svg class="st" viewBox="0 0 22 22"><circle cx="11" cy="11" r="10.9" fill="#ebe582"></circle><path d="M10.9 4 V13 M10.9 14.9 V18" fill="none" stroke="#fff" stroke-width="3.3"></path></svg><span class="f stt" style="letter-spacing: 0.57px;">[NA]</span></div></div>
<div class="tr" style="height:45px"><div class="c0"><svg class="keys k0" viewBox="0 0 20 21" opacity=".55"><path d="M3 .6 H8.8 L11 3 V8 L8.8 10.6 H3 L.6 8 V3 Z" fill="#b9bcc2"></path><rect x="3.2" y="3.6" width="3.6" height="4" rx="1" fill="#f1f1f1"></rect><rect x="5.6" y="9.6" width="3.6" height="10.8" rx=".8" fill="#c6c6c6"></rect><path d="M10.6 1.2 L13.2 .2 L15.6 5.6 L13.4 8.4 Z" fill="#c2c2c2"></path><ellipse cx="8.8" cy="7" rx="3.9" ry="4.2" fill="#cfcfcf"></ellipse><ellipse cx="9.6" cy="7.6" rx="1.8" ry="2.4" fill="#ececec"></ellipse><path d="M11.4 8 L16.6 16.6" stroke="#c9c9c9" stroke-width="3.6" stroke-linecap="round" fill="none"></path></svg></div><div class="td"><span class="f" style="letter-spacing: 0.47px;">2020::</span></div><div class="td"><span class="f" style="letter-spacing: 0.07px;">Tenkasi</span></div><div class="td tn"><span class="f" style="letter-spacing: 0.39px;">Arista Networks Switch</span><i class="clipg"></i></div><div class="td"><span class="f" style="letter-spacing: 0.57px;">[NA]</span></div><div class="td"><span class="f" style="letter-spacing: 0.57px;">[NA]</span></div><div class="td s"><svg class="st" viewBox="0 0 22 22"><circle cx="11" cy="11" r="10.9" fill="#ebe582"></circle><path d="M10.9 4 V13 M10.9 14.9 V18" fill="none" stroke="#fff" stroke-width="3.3"></path></svg><span class="f stt" style="letter-spacing: 0.28px;">None</span></div><div class="td s"><svg class="st" viewBox="0 0 22 22"><circle cx="11" cy="11" r="10.9" fill="#ebe582"></circle><path d="M10.9 4 V13 M10.9 14.9 V18" fill="none" stroke="#fff" stroke-width="3.3"></path></svg><span class="f stt" style="letter-spacing: 0.66px;">NA</span></div><div class="td s"><svg class="st" viewBox="0 0 22 22"><circle cx="11" cy="11" r="10.9" fill="#ebe582"></circle><path d="M10.9 4 V13 M10.9 14.9 V18" fill="none" stroke="#fff" stroke-width="3.3"></path></svg><span class="f stt" style="letter-spacing: 0.57px;">[NA]</span></div></div>
<div class="tr" style="height:45.5px"><div class="c0"><svg class="keys k0" viewBox="0 0 20 21" opacity=".55"><path d="M3 .6 H8.8 L11 3 V8 L8.8 10.6 H3 L.6 8 V3 Z" fill="#b9bcc2"></path><rect x="3.2" y="3.6" width="3.6" height="4" rx="1" fill="#f1f1f1"></rect><rect x="5.6" y="9.6" width="3.6" height="10.8" rx=".8" fill="#c6c6c6"></rect><path d="M10.6 1.2 L13.2 .2 L15.6 5.6 L13.4 8.4 Z" fill="#c2c2c2"></path><ellipse cx="8.8" cy="7" rx="3.9" ry="4.2" fill="#cfcfcf"></ellipse><ellipse cx="9.6" cy="7.6" rx="1.8" ry="2.4" fill="#ececec"></ellipse><path d="M11.4 8 L16.6 16.6" stroke="#c9c9c9" stroke-width="3.6" stroke-linecap="round" fill="none"></path></svg></div><div class="td"><span class="f" style="letter-spacing: 0.47px;">2020::</span></div><div class="td"><span class="f" style="letter-spacing: 0.17px;">Chennai</span></div><div class="td tn"><span class="f" style="letter-spacing: 0.39px;">Arista Networks Switch</span><i class="clipg"></i></div><div class="td"><span class="f" style="letter-spacing: 0.57px;">[NA]</span></div><div class="td"><span class="f" style="letter-spacing: 0.57px;">[NA]</span></div><div class="td s"><svg class="st" viewBox="0 0 22 22"><circle cx="11" cy="11" r="10.9" fill="#ebe582"></circle><path d="M10.9 4 V13 M10.9 14.9 V18" fill="none" stroke="#fff" stroke-width="3.3"></path></svg><span class="f stt" style="letter-spacing: 0.28px;">None</span></div><div class="td s"><svg class="st" viewBox="0 0 22 22"><circle cx="11" cy="11" r="10.9" fill="#ebe582"></circle><path d="M10.9 4 V13 M10.9 14.9 V18" fill="none" stroke="#fff" stroke-width="3.3"></path></svg><span class="f stt" style="letter-spacing: 0.66px;">NA</span></div><div class="td s"><svg class="st" viewBox="0 0 22 22"><circle cx="11" cy="11" r="10.9" fill="#ebe582"></circle><path d="M10.9 4 V13 M10.9 14.9 V18" fill="none" stroke="#fff" stroke-width="3.3"></path></svg><span class="f stt" style="letter-spacing: 0.57px;">[NA]</span></div></div>
<div class="tr" style="height:45px"><div class="c0"><svg class="keys k0" viewBox="0 0 20 21" opacity=".55"><path d="M3 .6 H8.8 L11 3 V8 L8.8 10.6 H3 L.6 8 V3 Z" fill="#b9bcc2"></path><rect x="3.2" y="3.6" width="3.6" height="4" rx="1" fill="#f1f1f1"></rect><rect x="5.6" y="9.6" width="3.6" height="10.8" rx=".8" fill="#c6c6c6"></rect><path d="M10.6 1.2 L13.2 .2 L15.6 5.6 L13.4 8.4 Z" fill="#c2c2c2"></path><ellipse cx="8.8" cy="7" rx="3.9" ry="4.2" fill="#cfcfcf"></ellipse><ellipse cx="9.6" cy="7.6" rx="1.8" ry="2.4" fill="#ececec"></ellipse><path d="M11.4 8 L16.6 16.6" stroke="#c9c9c9" stroke-width="3.6" stroke-linecap="round" fill="none"></path></svg></div><div class="td"><span class="f" style="letter-spacing: 0.13px;">27.1.1.1</span></div><div class="td"><span class="f" style="letter-spacing: 0.17px;">Chennai</span></div><div class="td tn"><span class="f" style="letter-spacing: 0.02px;">Cisco IOS Router</span></div><div class="td"><span class="f" style="letter-spacing: 0.57px;">[NA]</span></div><div class="td"><span class="f" style="letter-spacing: 0.57px;">[NA]</span></div><div class="td s"><svg class="st" viewBox="0 0 22 22"><circle cx="11" cy="11" r="10.9" fill="#ebe582"></circle><path d="M10.9 4 V13 M10.9 14.9 V18" fill="none" stroke="#fff" stroke-width="3.3"></path></svg><span class="f stt" style="letter-spacing: 0.28px;">None</span></div><div class="td s"><svg class="st" viewBox="0 0 22 22"><circle cx="11" cy="11" r="10.9" fill="#ebe582"></circle><path d="M10.9 4 V13 M10.9 14.9 V18" fill="none" stroke="#fff" stroke-width="3.3"></path></svg><span class="f stt" style="letter-spacing: 0.66px;">NA</span></div><div class="td s"><svg class="st" viewBox="0 0 22 22"><circle cx="11" cy="11" r="10.9" fill="#ebe582"></circle><path d="M10.9 4 V13 M10.9 14.9 V18" fill="none" stroke="#fff" stroke-width="3.3"></path></svg><span class="f stt" style="letter-spacing: 0.57px;">[NA]</span></div></div>
<div class="tr" style="height:45px"><div class="c0"><svg class="keys k0" viewBox="0 0 20 21" opacity=".55"><path d="M3 .6 H8.8 L11 3 V8 L8.8 10.6 H3 L.6 8 V3 Z" fill="#b9bcc2"></path><rect x="3.2" y="3.6" width="3.6" height="4" rx="1" fill="#f1f1f1"></rect><rect x="5.6" y="9.6" width="3.6" height="10.8" rx=".8" fill="#c6c6c6"></rect><path d="M10.6 1.2 L13.2 .2 L15.6 5.6 L13.4 8.4 Z" fill="#c2c2c2"></path><ellipse cx="8.8" cy="7" rx="3.9" ry="4.2" fill="#cfcfcf"></ellipse><ellipse cx="9.6" cy="7.6" rx="1.8" ry="2.4" fill="#ececec"></ellipse><path d="M11.4 8 L16.6 16.6" stroke="#c9c9c9" stroke-width="3.6" stroke-linecap="round" fill="none"></path></svg></div><div class="td"><span class="f" style="letter-spacing: 0.13px;">27.1.1.1</span></div><div class="td"><span class="f" style="letter-spacing: 0.07px;">Tenkasi</span></div><div class="td tn"><span class="f" style="letter-spacing: 0.02px;">Cisco IOS Router</span></div><div class="td"><span class="f" style="letter-spacing: 0.57px;">[NA]</span></div><div class="td"><span class="f" style="letter-spacing: 0.57px;">[NA]</span></div><div class="td s"><svg class="st" viewBox="0 0 22 22"><circle cx="11" cy="11" r="10.9" fill="#ebe582"></circle><path d="M10.9 4 V13 M10.9 14.9 V18" fill="none" stroke="#fff" stroke-width="3.3"></path></svg><span class="f stt" style="letter-spacing: 0.28px;">None</span></div><div class="td s"><svg class="st" viewBox="0 0 22 22"><circle cx="11" cy="11" r="10.9" fill="#ebe582"></circle><path d="M10.9 4 V13 M10.9 14.9 V18" fill="none" stroke="#fff" stroke-width="3.3"></path></svg><span class="f stt" style="letter-spacing: 0.66px;">NA</span></div><div class="td s"><svg class="st" viewBox="0 0 22 22"><circle cx="11" cy="11" r="10.9" fill="#ebe582"></circle><path d="M10.9 4 V13 M10.9 14.9 V18" fill="none" stroke="#fff" stroke-width="3.3"></path></svg><span class="f stt" style="letter-spacing: 0.57px;">[NA]</span></div></div>
</div>
<i class="sb"></i>
<div class="foot">
<svg width="1546" height="31" viewBox="0 0 1546 31" fill="none">
<circle cx="13.8" cy="14.8" r="7" stroke="#6c6c6c" stroke-width="1.6"></circle><path d="M18.9 19.8 L23.6 24.1" stroke="#6c6c6c" stroke-width="1.8"></path>
<path d="M38 17 A4.8 4.8 0 0 1 45 12.6 M47.2 16.6 A4.8 4.8 0 0 1 40.2 21" stroke="#cfcfcf" stroke-width="1.2"></path><path d="M43.2 10.4 L45.6 12.8 L42.6 14.2 M42 23.2 L39.6 20.8 L42.6 19.4" stroke="#cfcfcf" stroke-width="1"></path>
<rect x="65" y="11" width="11" height="10.8" rx="2" fill="#cfcfcf"></rect><path d="M65 14.6 H76 M65 18.2 H76 M68.7 13 V21.8 M72.3 13 V21.8" stroke="#f1f1f1" stroke-width=".8"></path>
<g fill="#cbcbcb"><rect x="651.3" y="8.4" width="2.3" height="14"></rect><path d="M664.7 8.4 V22.4 L653.6 15.4 Z"></path><path d="M680.4 8.4 V22.4 L671 15.4 Z M690 8.4 V22.4 L680.6 15.4 Z"></path>
<path d="M804.2 8.4 V22.4 L813.6 15.4 Z M813.4 8.4 V22.4 L822.6 15.4 Z"></path><path d="M828.8 8.4 V22.4 L838.6 15.4 Z"></path><rect x="838.5" y="8.4" width="2.3" height="14"></rect></g>
<path d="M695.5 5 V27 M797 5 V27" stroke="#e2e2e2" stroke-width="1"></path><path d="M696.5 5 V27 M798 5 V27" stroke="#fbfbfb" stroke-width="1"></path>
<path d="M878.3 13.3 L883.3 18.3 L888.3 13.3" stroke="#222" stroke-width="2.1"></path>
</svg>
<span class="t" style="left:701.6px"><span class="f" style="letter-spacing: -0.13px;">Page</span></span>
<span class="pin">1</span>
<span class="t" style="left:770.4px"><span class="f" style="letter-spacing: -0.14px;">of 1</span></span>
<span class="psel">50</span>
<span class="t" style="right:6.5px;top:4.2px"><span class="f" style="letter-spacing: -0.13px;">View 1 - 29 of 29</span></span>
</div>
</div>
<div class="chat"><svg width="55" height="38" viewBox="0 0 55 38" fill="none" stroke="#c6ead7" stroke-width="1.2">
<path d="M19 16.4 V12.4 Q19 10.6 20.8 10.6 H38.6 Q40.4 10.6 40.4 12.4 V23 Q40.4 25.2 37 25.4"></path>
<path d="M16.4 17 H34.2 Q36.4 17 36.4 19.2 V29.2 Q36.4 31.4 34.2 31.4 H25.4 L20.6 36.4 L19.8 31.4 H16.4 Q14.4 31.4 14.4 29.2 V19.2 Q14.4 17 16.4 17 Z" fill="#35ac6e"></path>
<path d="M19.4 21.6 H25.6 M19.4 24.5 H31.6 M19.4 27.4 H31.6" stroke-width="1.4"></path>
</svg></div>

</body></html>
